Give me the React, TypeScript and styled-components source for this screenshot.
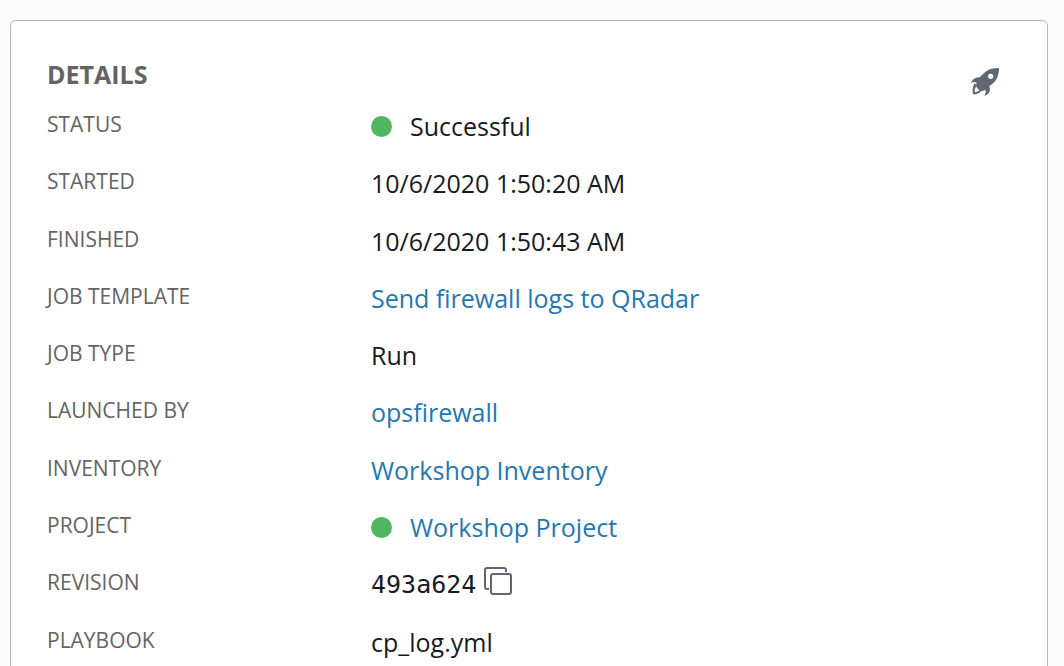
import React from "react";
import styled, { createGlobalStyle } from "styled-components";

const GlobalStyle = createGlobalStyle`
  * {
    box-sizing: border-box;
  }
  body {
    margin: 0;
    background: #fcfcfc;
    font-family: "Open Sans", "Noto Sans", sans-serif;
  }
`;

const Page = styled.main`
  padding: 20px 16px 20px 10px;
`;

const Card = styled.section`
  padding: 36px 36px 16px;
  background: #fff;
  border: 1px solid #b7b7b7;
  border-radius: 6px;
`;

const Header = styled.header`
  display: flex;
  align-items: flex-start;
  justify-content: space-between;
  height: 48px;
`;

const Title = styled.h1`
  margin: 0;
  color: #646464;
  font-size: 25px;
  font-weight: 700;
  line-height: 34px;
`;

const IconButton = styled.button`
  display: inline-flex;
  padding: 0;
  border: 0;
  background: none;
  color: #606772;
  cursor: pointer;
`;

const LaunchButton = styled(IconButton)`
  padding: 10px 11px;
`;

const CopyButton = styled(IconButton)`
  align-self: flex-start;
  padding-top: 4px;
`;

const DetailList = styled.dl`
  display: grid;
  grid-auto-rows: 1fr;
  min-height: 573px;
  margin: 0;
`;

const DetailRow = styled.div`
  display: grid;
  grid-template-columns: 324px 1fr;
`;

const Label = styled.dt`
  color: #646464;
  font-size: 21px;
  line-height: 38px;
  text-transform: uppercase;
`;

const Value = styled.dd`
  display: flex;
  align-items: center;
  height: 43px;
  margin: 0;
  color: #161b1f;
  font-size: 25px;
  line-height: 43px;
`;

const StatusDot = styled.span`
  width: 21px;
  height: 21px;
  margin-right: 18px;
  border-radius: 50%;
  background: #4fb760;
`;

const Link = styled.a`
  color: #1f78b5;
  text-decoration: none;
`;

const Revision = styled.code`
  margin-right: 8px;
  font-family: "DejaVu Sans Mono", monospace;
  font-size: 25px;
`;

const RocketIcon = () => (
  <svg width="30" height="30" viewBox="0 0 90 90" aria-hidden="true">
    <path
      fill="currentColor"
      fillRule="evenodd"
      d="M87 3C70 3 57 6 47 14C40 20 34 25 29 31C18 31 8 36 3 48C9 44 14 44 20 47C17 53 18 59 22 64C26 69 31 72 37 72C41 71 43 70 46 68C48 74 47 80 43 87C53 83 60 77 60 68L58 57C66 52 73 46 78 39C84 29 87 17 87 3ZM62 20A8 8 0 1 1 62 36A8 8 0 1 1 62 20Z"
    />
    <path
      fill="currentColor"
      d="M15 48C8 57 6 69 9 82C20 83 29 79 36 70L29 69C25 73 21 75 15 76C13 69 15 63 20 58Z"
    />
  </svg>
);

const CopyIcon = () => (
  <svg width="28" height="28" viewBox="0 0 28 28" fill="none" stroke="currentColor" strokeWidth="2" aria-hidden="true">
    <path d="M22 5V3Q22 1 20 1H3Q1 1 1 3V20Q1 22 3 22H5" />
    <rect x="7" y="7" width="20" height="20" rx="2" />
  </svg>
);

type Detail = {
  label: string;
  value: string;
  kind?: "link" | "revision";
  dot?: boolean;
};

const details: Detail[] = [
  { label: "Status", value: "Successful", dot: true },
  { label: "Started", value: "10/6/2020 1:50:20 AM" },
  { label: "Finished", value: "10/6/2020 1:50:43 AM" },
  { label: "Job Template", value: "Send firewall logs to QRadar", kind: "link" },
  { label: "Job Type", value: "Run" },
  { label: "Launched By", value: "opsfirewall", kind: "link" },
  { label: "Inventory", value: "Workshop Inventory", kind: "link" },
  { label: "Project", value: "Workshop Project", kind: "link", dot: true },
  { label: "Revision", value: "493a624", kind: "revision" },
  { label: "Playbook", value: "cp_log.yml" },
];

const DetailValue = ({ value, kind }: Detail) => {
  if (kind === "link") return <Link href="#">{value}</Link>;
  if (kind === "revision")
    return (
      <>
        <Revision>{value}</Revision>
        <CopyButton type="button" aria-label="Copy revision">
          <CopyIcon />
        </CopyButton>
      </>
    );
  return <span>{value}</span>;
};

export default function App() {
  return (
    <>
      <GlobalStyle />
      <Page>
        <Card>
          <Header>
            <Title>DETAILS</Title>
            <LaunchButton type="button" aria-label="Relaunch job">
              <RocketIcon />
            </LaunchButton>
          </Header>
          <DetailList>
            {details.map((detail) => (
              <DetailRow key={detail.label}>
                <Label>{detail.label}</Label>
                <Value>
                  {detail.dot && <StatusDot />}
                  <DetailValue {...detail} />
                </Value>
              </DetailRow>
            ))}
          </DetailList>
        </Card>
      </Page>
    </>
  );
}
